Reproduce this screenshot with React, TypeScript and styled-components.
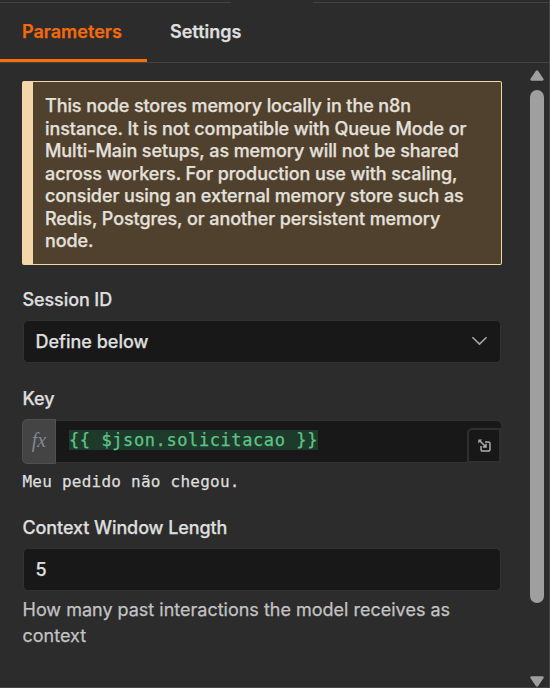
import React from 'react';
import styled, { createGlobalStyle } from 'styled-components';

const noticeLines = [
  'This node stores memory locally in the n8n',
  'instance. It is not compatible with Queue Mode or',
  'Multi-Main setups, as memory will not be shared',
  'across workers. For production use with scaling,',
  'consider using an external memory store such as',
  'Redis, Postgres, or another persistent memory',
  'node.',
];

const App = () => {
  return (
    <>
      <GlobalStyle />
      <Panel>
        <TopEdge>
          <EdgeLine $width={231} />
          <EdgeLine $width={236} />
        </TopEdge>
        <Tabs>
          <Tab $active $width={147}>Parameters</Tab>
          <Tab $width={118}>Settings</Tab>
        </Tabs>
        <Body>
          <Content>
            <Notice>
              {noticeLines.map((line) => (
                <NoticeLine key={line}>{line}</NoticeLine>
              ))}
            </Notice>
            <Label $top={23}>Session ID</Label>
            <Select>
              <span>Define below</span>
              <svg width="17" height="12" viewBox="0 0 18 12" fill="none" stroke="#a5a5a5" strokeWidth="1.7">
                <path d="M1.5 2 9 9.3 16.5 2" />
              </svg>
            </Select>
            <Label $top={24}>Key</Label>
            <ExpressionRow>
              <FxBadge>fx</FxBadge>
              <Expression>
                <Code>{'{{ $json.solicitacao }}'}</Code>
                <ExpandButton>
                  <svg width="13" height="13" viewBox="0 0 13 13" fill="none" stroke="#ababab" strokeWidth="1.5">
                    <path d="M7 3h3.2a1.8 1.8 0 0 1 1.8 1.8v5.4a1.8 1.8 0 0 1-1.8 1.8H4.800a1.8 1.8 0 0 1-1.8-1.8V7" />
                    <path d="M2 2 7.500 7.500M8 4.800V8H4.800" />
                    <path d="M.3.5h3.900L.3 4.400Z" fill="#ababab" stroke="none" />
                  </svg>
                </ExpandButton>
              </Expression>
            </ExpressionRow>
            <Result>Meu pedido não chegou.</Result>
            <Label $top={22}>Context Window Length</Label>
            <TextField>5</TextField>
            <Help>
              How many past interactions the model receives as
              <br />
              context
            </Help>
          </Content>
          <Scrollbar>
            <svg width="14" height="11" viewBox="0 0 14 11">
              <path d="M5.8 1Q7 -.6 8.2 1L13.6 9Q14 10.7 12.4 10.7H1.6Q0 10.7.4 9Z" fill="#9f9f9f" />
            </svg>
            <Thumb />
            <svg width="14" height="11" viewBox="0 0 14 11">
              <path d="M5.8 10Q7 11.6 8.2 10L13.6 2Q14 .3 12.4.3H1.6Q0 .3.4 2Z" fill="#9f9f9f" />
            </svg>
          </Scrollbar>
        </Body>
      </Panel>
    </>
  );
};

const GlobalStyle = createGlobalStyle`
  body {
    margin: 0;
    background: #2c2c2c;
  }
  * {
    box-sizing: border-box;
  }
`;

const Panel = styled.div`
  width: 550px;
  height: 688px;
  display: flex;
  flex-direction: column;
  overflow: hidden;
  background: #2c2c2c;
  border-right: 1px solid #464646;
  border-bottom: 1px solid #484446;
  color: #dedede;
  font-family: Inter, sans-serif;
  font-size: 18px;
  font-weight: 500;
  -webkit-text-stroke: 0.25px;
`;

const TopEdge = styled.div`
  height: 3px;
  flex: none;
  display: flex;
  justify-content: space-between;
`;

const EdgeLine = styled.div<{ $width: number }>`
  width: ${(p) => p.$width}px;
  border-bottom: 1px solid #424242;
`;

const Tabs = styled.div`
  height: 60px;
  flex: none;
  display: flex;
  border-bottom: 1px solid #424242;
`;

const Tab = styled.div<{ $active?: boolean; $width: number }>`
  width: ${(p) => p.$width}px;
  height: 59px;
  padding: 17px 0 0 ${(p) => (p.$active ? 22 : 23)}px;
  line-height: 24px;
  font-weight: 600;
  letter-spacing: 0;
  color: ${(p) => (p.$active ? '#f26a0a' : '#dedede')};
  border-bottom: 3px solid ${(p) => (p.$active ? '#ff6d00' : 'transparent')};
`;

const Body = styled.div`
  flex: 1;
  display: flex;
  justify-content: space-between;
`;

const Content = styled.div`
  width: 480px;
  margin-left: 22px;
  padding-top: 18px;
`;

const Notice = styled.div`
  height: 184px;
  padding: 13px 0 0 12px;
  background: #50412e;
  border: 1.5px solid #f4d6a8;
  border-left-width: 11px;
  border-radius: 2px;
  color: #e4e0dc;
`;

const NoticeLine = styled.div`
  line-height: 22.5px;
  white-space: nowrap;
  letter-spacing: -0.09px;
`;

const Label = styled.div<{ $top: number }>`
  margin: ${(p) => p.$top}px 0 8px 0.5px;
  line-height: 24px;
  letter-spacing: -0.1px;
`;

const Field = styled.div`
  height: 43px;
  display: flex;
  align-items: center;
  background: #181818;
  border: 1px solid #303131;
  border-radius: 5px;
`;

const TextField = styled(Field)`
  margin-left: 1px;
  margin-right: 1px;
  padding: 0 12px 1px 11.5px;
`;

const Select = styled(TextField)`
  justify-content: space-between;
`;

const ExpressionRow = styled.div`
  height: 44px;
  display: flex;
  align-items: center;
`;

const FxBadge = styled.div`
  width: 34px;
  height: 45px;
  background: #444;
  border: 1px solid #505050;
  border-radius: 5px 0 0 5px;
  color: #818792;
  font: italic 400 20px/40px 'Liberation Serif', serif;
  text-align: center;
  -webkit-text-stroke: 0;
`;

const Expression = styled(Field)`
  flex: 1;
  margin-right: 1px;
  padding-left: 13px;
  justify-content: space-between;
  border-left: none;
  border-right: none;
  border-radius: 0 5px 0 0;
`;

const Code = styled.span`
  height: 20px;
  margin-bottom: 2px;
  background: #1e3a2b;
  color: #5ec488;
  font: 400 17px/20px 'DejaVu Sans Mono', monospace;
  letter-spacing: 0.59px;
  white-space: pre;
`;

const ExpandButton = styled.div`
  width: 34px;
  height: 35px;
  align-self: flex-end;
  display: flex;
  align-items: center;
  justify-content: center;
  margin-bottom: -1px;
  border: 2px solid #2d302f;
  border-radius: 5px 0 0 0;
`;

const Result = styled.div`
  margin: 7px 0 0 0.5px;
  line-height: 24px;
  font-family: 'DejaVu Sans Mono', monospace;
  font-size: 16px;
  font-weight: 400;
  letter-spacing: 0.24px;
`;

const Help = styled.div`
  margin: 6px 0 0 0.5px;
  color: #c3c3c3;
  font-weight: 400;
  line-height: 25.5px;
  white-space: nowrap;
`;

const Scrollbar = styled.div`
  width: 14px;
  height: 617px;
  margin: 7px 5px 0 0;
  display: flex;
  flex-direction: column;
  svg {
    display: block;
    flex: none;
  }
  svg:last-child {
    margin-top: auto;
  }
`;

const Thumb = styled.div`
  height: 513px;
  margin-top: 9px;
  border-radius: 7px;
  background: #9f9f9f;
`;

export default App;
